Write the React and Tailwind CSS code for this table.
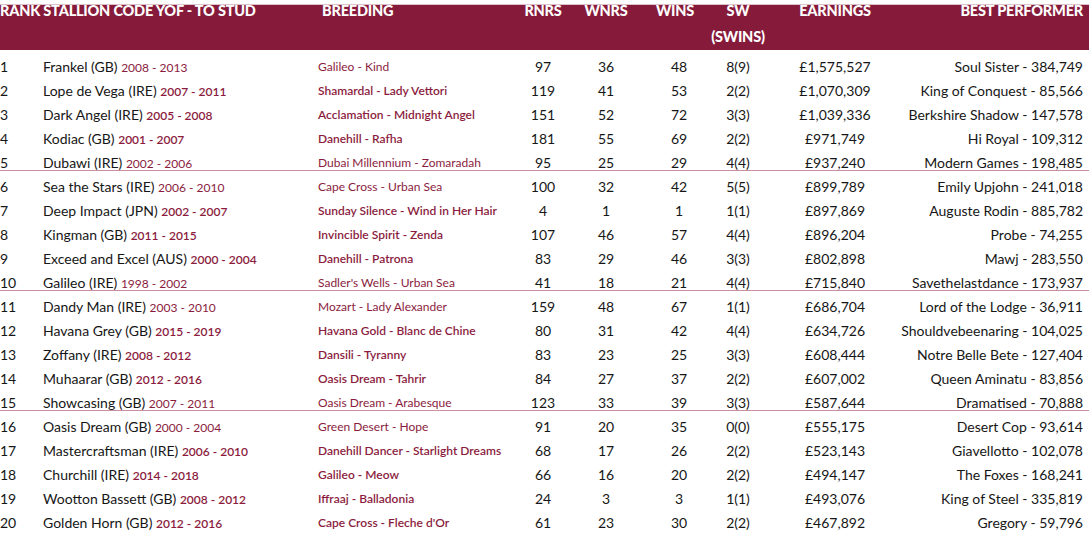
const rows = [
  ['1', 'Frankel (GB)', '2008 - 2013', 'Galileo - Kind', 97, 36, 48, '8(9)', '£1,575,527', 'Soul Sister - 384,749'],
  ['2', 'Lope de Vega (IRE)', '2007 - 2011', 'Shamardal - Lady Vettori', 119, 41, 53, '2(2)', '£1,070,309', 'King of Conquest - 85,566'],
  ['3', 'Dark Angel (IRE)', '2005 - 2008', 'Acclamation - Midnight Angel', 151, 52, 72, '3(3)', '£1,039,336', 'Berkshire Shadow - 147,578'],
  ['4', 'Kodiac (GB)', '2001 - 2007', 'Danehill - Rafha', 181, 55, 69, '2(2)', '£971,749', 'Hi Royal - 109,312'],
  ['5', 'Dubawi (IRE)', '2002 - 2006', 'Dubai Millennium - Zomaradah', 95, 25, 29, '4(4)', '£937,240', 'Modern Games - 198,485'],
  ['6', 'Sea the Stars (IRE)', '2006 - 2010', 'Cape Cross - Urban Sea', 100, 32, 42, '5(5)', '£899,789', 'Emily Upjohn - 241,018'],
  ['7', 'Deep Impact (JPN)', '2002 - 2007', 'Sunday Silence - Wind in Her Hair', 4, 1, 1, '1(1)', '£897,869', 'Auguste Rodin - 885,782'],
  ['8', 'Kingman (GB)', '2011 - 2015', 'Invincible Spirit - Zenda', 107, 46, 57, '4(4)', '£896,204', 'Probe - 74,255'],
  ['9', 'Exceed and Excel (AUS)', '2000 - 2004', 'Danehill - Patrona', 83, 29, 46, '3(3)', '£802,898', 'Mawj - 283,550'],
  ['10', 'Galileo (IRE)', '1998 - 2002', "Sadler's Wells - Urban Sea", 41, 18, 21, '4(4)', '£715,840', 'Savethelastdance - 173,937'],
  ['11', 'Dandy Man (IRE)', '2003 - 2010', 'Mozart - Lady Alexander', 159, 48, 67, '1(1)', '£686,704', 'Lord of the Lodge - 36,911'],
  ['12', 'Havana Grey (GB)', '2015 - 2019', 'Havana Gold - Blanc de Chine', 80, 31, 42, '4(4)', '£634,726', 'Shouldvebeenaring - 104,025'],
  ['13', 'Zoffany (IRE)', '2008 - 2012', 'Dansili - Tyranny', 83, 23, 25, '3(3)', '£608,444', 'Notre Belle Bete - 127,404'],
  ['14', 'Muhaarar (GB)', '2012 - 2016', 'Oasis Dream - Tahrir', 84, 27, 37, '2(2)', '£607,002', 'Queen Aminatu - 83,856'],
  ['15', 'Showcasing (GB)', '2007 - 2011', 'Oasis Dream - Arabesque', 123, 33, 39, '3(3)', '£587,644', 'Dramatised - 70,888'],
  ['16', 'Oasis Dream (GB)', '2000 - 2004', 'Green Desert - Hope', 91, 20, 35, '0(0)', '£555,175', 'Desert Cop - 93,614'],
  ['17', 'Mastercraftsman (IRE)', '2006 - 2010', 'Danehill Dancer - Starlight Dreams', 68, 17, 26, '2(2)', '£523,143', 'Giavellotto - 102,078'],
  ['18', 'Churchill (IRE)', '2014 - 2018', 'Galileo - Meow', 66, 16, 20, '2(2)', '£494,147', 'The Foxes - 168,241'],
  ['19', 'Wootton Bassett (GB)', '2008 - 2012', 'Iffraaj - Balladonia', 24, 3, 3, '1(1)', '£493,076', 'King of Steel - 335,819'],
  ['20', 'Golden Horn (GB)', '2012 - 2016', "Cape Cross - Fleche d'Or", 61, 23, 30, '2(2)', '£467,892', 'Gregory - 59,796'],
]

const lightRows = [1, 5, 6, 10, 11, 15, 16]
const ruleRows = [5, 10, 15]

const cols = 'grid grid-cols-[43px_275px_202px_46px_80px_66px_52px_142px_177px]'

const App = () => {
  return (
    <div className="w-[1089px] h-[552px] bg-white text-[#161616] font-['Lato',sans-serif] overflow-hidden">
      <div className="h-[4px]" />

      {/* header */}
      <div className="h-[46px] bg-[#861a3a] border-t border-[#dcc3cb] text-white font-black uppercase text-[14.5px] tracking-[-0.2px]">
        <div className={`${cols} leading-[26px] -mt-[7px]`}>
          <div className="col-span-2 whitespace-nowrap">Rank Stallion Code YOF - To Stud</div>
          <div className="pl-[4px]">Breeding</div>
          <div className="flex justify-center">RNRS</div>
          <div className="flex justify-center">WNRS</div>
          <div className="flex justify-center pr-[8px]">Wins</div>
          <div className="flex flex-col items-center whitespace-nowrap">
            <span>SW</span>
            <span>(Swins)</span>
          </div>
          <div className="flex justify-center">Earnings</div>
          <div className="flex justify-end whitespace-nowrap">Best Performer</div>
        </div>
      </div>

      {/* rows */}
      <div className="pt-[3px]">
        {rows.map((r) => {
          const n = Number(r[0])
          const light = lightRows.includes(n)
          const rule = ruleRows.includes(n)
          const maroon = `text-[12px] text-[#8b1c3e] ${light ? 'font-normal' : 'font-semibold'}`
          return (
            <div key={r[0]} className="h-[24px]">
              <div
                className={`${cols} items-center h-[22px] pt-[3px] text-[14px] whitespace-nowrap border-b ${
                  rule ? 'border-[#c9909f]' : 'border-transparent'
                }`}
              >
                <div>{r[0]}</div>
                <div>
                  {r[1]} <span className={maroon}>{r[2]}</span>
                </div>
                <div className={maroon}>{r[3]}</div>
                <div className="flex justify-center">{r[4]}</div>
                <div className="flex justify-center">{r[5]}</div>
                <div className="flex justify-center">{r[6]}</div>
                <div className="flex justify-center">{r[7]}</div>
                <div className="flex justify-center">{r[8]}</div>
                <div className="flex justify-end">{r[9]}</div>
              </div>
            </div>
          )
        })}
      </div>
    </div>
  )
}

export default App
